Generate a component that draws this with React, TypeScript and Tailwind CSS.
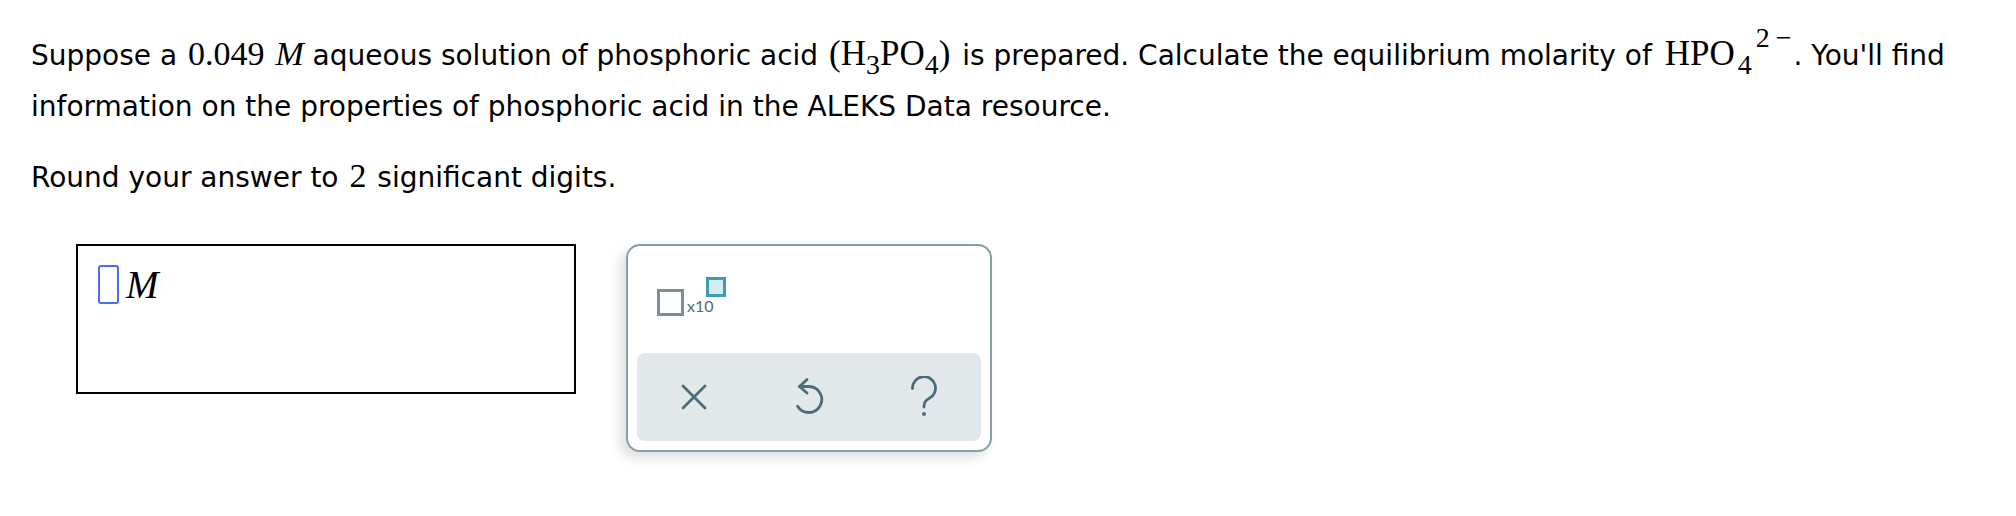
import React from "react";

const serif = "font-['Liberation_Serif','Times_New_Roman',serif]";

function XIcon() {
  return (
    <svg width="28" height="28" viewBox="0 0 28 28" fill="none">
      <path d="M3 3 L25 25 M25 3 L3 25" stroke="#4d6c79" strokeWidth="2.8" strokeLinecap="round" />
    </svg>
  );
}

function UndoIcon() {
  return (
    <svg width="30" height="40" viewBox="0 0 30 40" fill="none">
      <path d="M13 2.5 L5.5 9.5 L13 16" stroke="#4d6c79" strokeWidth="2.8" strokeLinecap="round" strokeLinejoin="round" />
      <path d="M5.5 9.5 H15 A13 13 0 1 1 3.6 29.2" stroke="#4d6c79" strokeWidth="2.8" strokeLinecap="round" strokeLinejoin="round" />
    </svg>
  );
}

function HelpIcon() {
  return (
    <svg width="32" height="42" viewBox="0 0 32 42" fill="none">
      <path d="M4.5 12.5 A11.5 11.5 0 1 1 21 22.5 Q16 25 16 30 V31" stroke="#4d6c79" strokeWidth="2.8" strokeLinecap="round" strokeLinejoin="round" />
      <circle cx="16" cy="38" r="2" fill="#4d6c79" />
    </svg>
  );
}

export default function App() {
  return (
    <div className="w-full min-h-[516px] bg-white text-black font-['DejaVu_Sans','Verdana',sans-serif]">
      <div className="pl-[31px] pt-[31px] text-[28px] leading-[45px]">
        <div className="whitespace-nowrap">
          Suppose a <span className={`${serif} text-[34px] ml-[2px]`}>0.049</span>{" "}
          <span className={`${serif} text-[34px] italic ml-[2px]`}>M</span> aqueous solution of phosphoric acid{" "}
          <span className={`${serif} text-[35px] pl-[2px] pr-[3px]`}>
            (H<span className="relative top-[9px] text-[28px] leading-none">3</span>PO
            <span className="relative top-[9px] text-[28px] leading-none">4</span>)
          </span>{" "}
          is prepared. Calculate the equilibrium molarity of{" "}
          <span className={`${serif} text-[35px] pl-[4px] pr-[2px]`}>
            HPO<span className="relative top-[9px] ml-[3px] text-[28px] leading-none">4</span>
            <span className="relative -top-[18px] ml-[4px] text-[28px] leading-none">
              2<span className="ml-[6px]">−</span>
            </span>
          </span>
          . You'll find
        </div>
        <div className="mt-[6px] whitespace-nowrap">
          information on the properties of phosphoric acid in the ALEKS Data resource.
        </div>
        <div className="mt-[24px]">
          Round your answer to <span className={`${serif} text-[34px] px-[2px]`}>2</span> significant digits.
        </div>
      </div>

      <div className="mt-[44px] flex items-start pl-[76px]">
        <div className="w-[500px] h-[150px] border-2 border-black flex items-start pl-[20px] pt-[19px]">
          <div className="w-[21px] h-[39px] border-2 border-[#4a6cf7] rounded-[3px]" />
          <span className={`${serif} italic text-[39px] leading-[39px] ml-[7px]`}>M</span>
        </div>

        <div className="ml-[50px] w-[366px] h-[208px] border-2 border-[#8a9ea8] rounded-[14px] bg-white shadow-[-6px_6px_12px_rgba(0,0,0,0.13)] flex flex-col px-[9px] pb-[9px]">
          <div className="flex-1 flex items-start pl-[20px] pt-[31px]">
            <div className="mt-[12px] w-[27px] h-[27px] border-[3px] border-[#7b8f99]" />
            <span className="mt-[21px] ml-[3px] text-[16px] leading-none text-[#4f6b77] font-['Lato','Inter',sans-serif]">
              x10
            </span>
            <div className="ml-[-8px] w-[20px] h-[20px] border-[3px] border-[#3d9bb3] bg-[#d4ecf3]" />
          </div>
          <div className="h-[88px] rounded-[8px] bg-[#e2e7ea] grid grid-cols-3 items-center justify-items-center">
            <XIcon />
            <UndoIcon />
            <HelpIcon />
          </div>
        </div>
      </div>
    </div>
  );
}
